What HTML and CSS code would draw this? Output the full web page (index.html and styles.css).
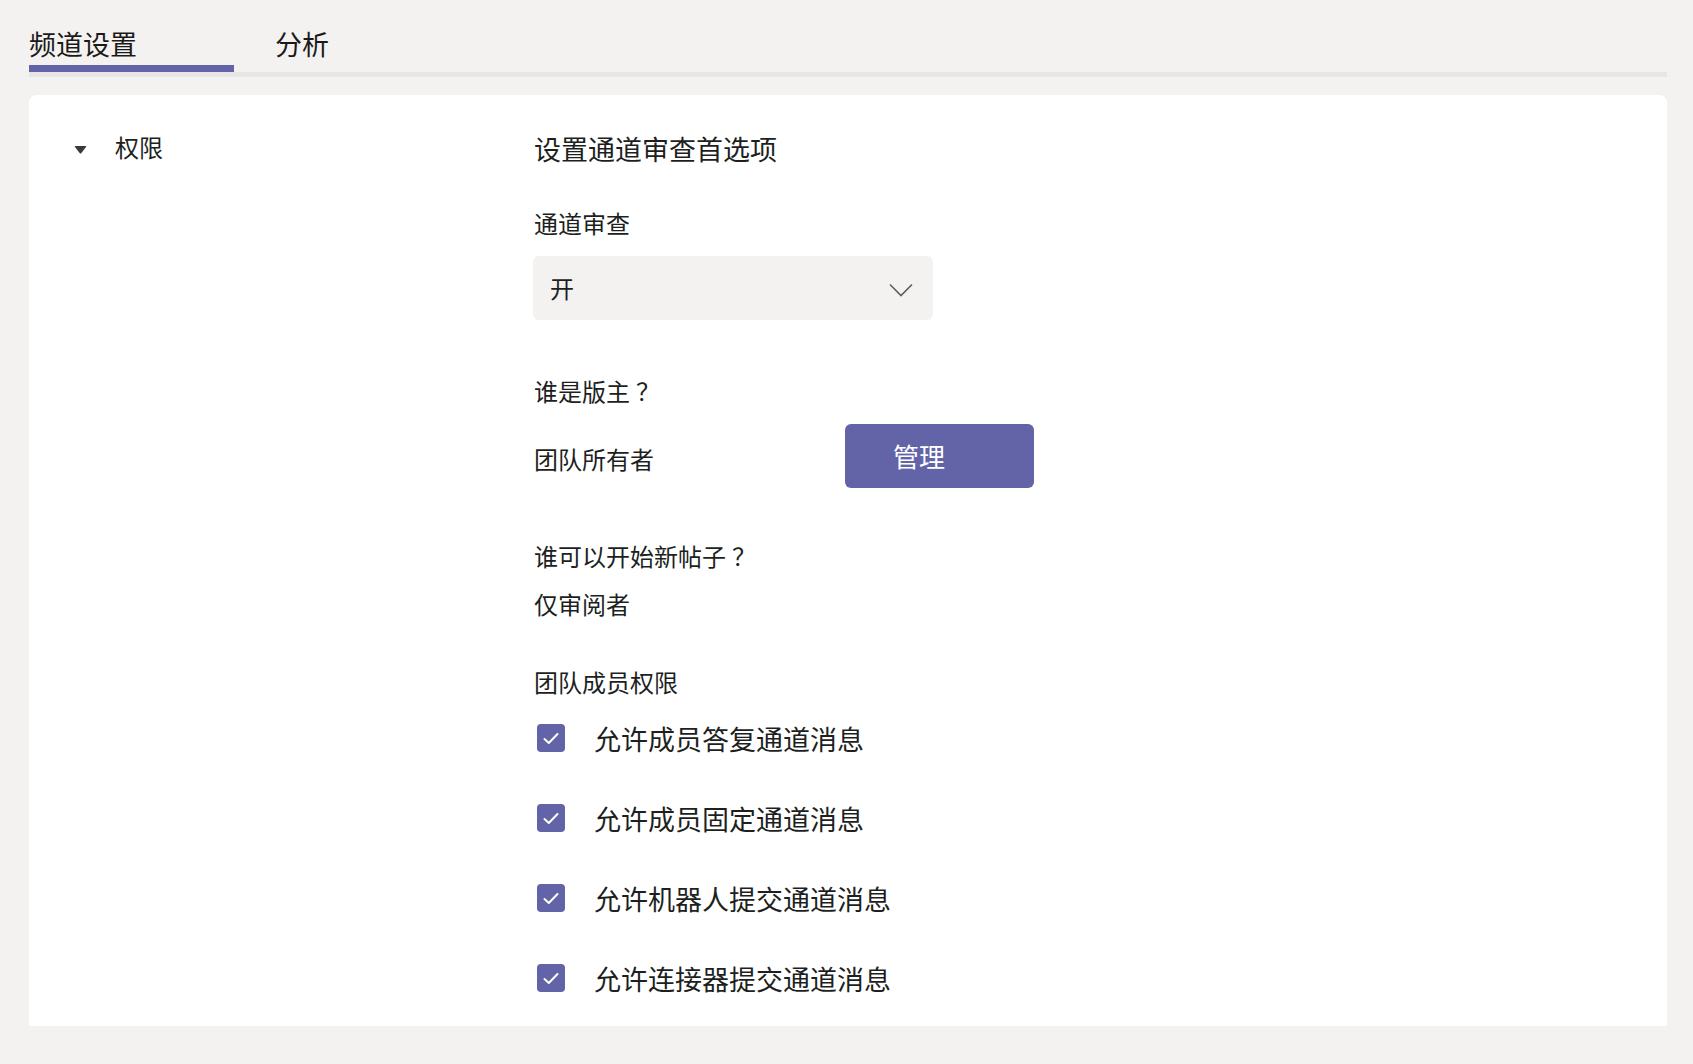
FILE: index.html
```html
<!DOCTYPE html>
<html lang="zh-CN">
<head>
<meta charset="utf-8">
<title>频道设置</title>
<link rel="stylesheet" href="styles.css">
</head>
<body>
<div class="page">
  <nav class="tabs">
    <div class="tab tab-active">频道设置</div>
    <div class="tab tab-second">分析</div>
  </nav>
  <main class="card">
    <aside class="side">
      <div class="side-item">
        <svg class="caret" width="13" height="8" viewBox="0 0 13 8"><path d="M0.8 0.8 Q0.5 0 1.5 0 H11.5 Q12.5 0 12.2 0.8 L7.2 7.2 Q6.5 8 5.8 7.2 Z" fill="#3b3a39"/></svg>
        <span class="side-text">权限</span>
      </div>
    </aside>
    <section class="content">
      <h1 class="heading">设置通道审查首选项</h1>
      <div class="label label-first">通道审查</div>
      <div class="select">
        <span class="select-value">开</span>
        <svg class="chevron" width="24" height="14" viewBox="0 0 24 14"><path d="M1 1.5 L12 12.5 L23 1.5" fill="none" stroke="#605e5c" stroke-width="1.6"/></svg>
      </div>
      <div class="label label-q1">谁是版主<span class="qmark">？</span></div>
      <div class="owner-row">
        <span class="owner-text">团队所有者</span>
        <button class="btn">管理</button>
      </div>
      <div class="label label-q2">谁可以开始新帖子<span class="qmark">？</span></div>
      <div class="label label-value">仅审阅者</div>
      <div class="label label-q3">团队成员权限</div>
      <div class="checks">
        <div class="check-row"><span class="box"><svg width="18" height="13" viewBox="0 0 18 13"><path d="M2.5 7 L6.8 11 L15.5 2" fill="none" stroke="#fff" stroke-width="2" stroke-linecap="round" stroke-linejoin="round"/></svg></span><span class="check-label">允许成员答复通道消息</span></div>
        <div class="check-row"><span class="box"><svg width="18" height="13" viewBox="0 0 18 13"><path d="M2.5 7 L6.8 11 L15.5 2" fill="none" stroke="#fff" stroke-width="2" stroke-linecap="round" stroke-linejoin="round"/></svg></span><span class="check-label">允许成员固定通道消息</span></div>
        <div class="check-row"><span class="box"><svg width="18" height="13" viewBox="0 0 18 13"><path d="M2.5 7 L6.8 11 L15.5 2" fill="none" stroke="#fff" stroke-width="2" stroke-linecap="round" stroke-linejoin="round"/></svg></span><span class="check-label">允许机器人提交通道消息</span></div>
        <div class="check-row"><span class="box"><svg width="18" height="13" viewBox="0 0 18 13"><path d="M2.5 7 L6.8 11 L15.5 2" fill="none" stroke="#fff" stroke-width="2" stroke-linecap="round" stroke-linejoin="round"/></svg></span><span class="check-label">允许连接器提交通道消息</span></div>
      </div>
    </section>
  </main>
</div>
</body>
</html>
```

FILE: styles.css
```css
* { box-sizing: border-box; }
html, body {
  margin: 0;
  padding: 0;
  background: #f3f2f1;
}
body {
  font-family: "Noto Sans CJK SC", "Noto Sans", sans-serif;
  color: #201f1e;
}
.page {
  height: 1064px;
  display: flex;
  flex-direction: column;
  padding: 0 26px 0 29px;
}
.tabs {
  display: flex;
  padding-top: 30px;
  border-bottom: 5px solid #e8e6e4;
}
.tab {
  font-size: 27px;
  line-height: 27px;
  padding-bottom: 8px;
  border-bottom: 7px solid transparent;
  color: #1b1a19;
}
.tab-active {
  width: 205px;
  border-bottom-color: #6264a7;
}
.tab-second {
  margin-left: 41px;
}
.card {
  flex: 1;
  margin-top: 18px;
  margin-bottom: 38px;
  background: #ffffff;
  border-radius: 8px 8px 0 0;
  padding: 40px 0 0 45px;
  display: flex;
}
.side {
  width: 460px;
  flex: none;
}
.side-item {
  display: flex;
  align-items: center;
}
.caret {
  margin-top: 5px;
  flex: none;
}
.side-text {
  margin-left: 28px;
  font-size: 24px;
  line-height: 24px;
}
.content {
  display: flex;
  flex-direction: column;
  align-items: flex-start;
}
.heading {
  margin: 0;
  font-size: 27px;
  line-height: 27px;
  font-weight: 400;
}
.label {
  font-size: 24px;
  line-height: 24px;
}
.qmark {
  padding-left: 6px;
}
.label-first { margin-top: 49px; }
.label-q1 { margin-top: 59px; }
.label-q2 { margin-top: 56px; }
.label-value { margin-top: 24px; }
.label-q3 { margin-top: 54px; }
.select {
  margin-top: 21px;
  margin-left: -1px;
  width: 400px;
  height: 64px;
  background: #f3f2f1;
  border-radius: 6px;
  padding: 0 20px 0 17px;
  display: flex;
  align-items: center;
  justify-content: space-between;
}
.select-value {
  font-size: 24px;
  line-height: 24px;
}
.chevron { margin-top: 3px; }
.owner-row {
  margin-top: 21px;
  display: flex;
  align-items: center;
}
.owner-text {
  width: 311px;
  font-size: 24px;
  line-height: 24px;
  padding-top: 5px;
}
.btn {
  width: 189px;
  height: 64px;
  border: none;
  border-radius: 6px;
  background: #6264a7;
  color: #ffffff;
  font-family: inherit;
  font-size: 26px;
  line-height: 26px;
  text-align: left;
  padding: 0 0 0 48px;
}
.checks {
  margin-top: 30px;
  display: flex;
  flex-direction: column;
  gap: 52px;
}
.check-row {
  display: flex;
  align-items: center;
  height: 28px;
}
.box {
  width: 28px;
  height: 28px;
  margin-left: 3px;
  border-radius: 4px;
  background: #6264a7;
  display: flex;
  align-items: center;
  justify-content: center;
  flex: none;
}
.check-label {
  margin-left: 29px;
  font-size: 27px;
  line-height: 28px;
  padding-top: 2px;
}
```
